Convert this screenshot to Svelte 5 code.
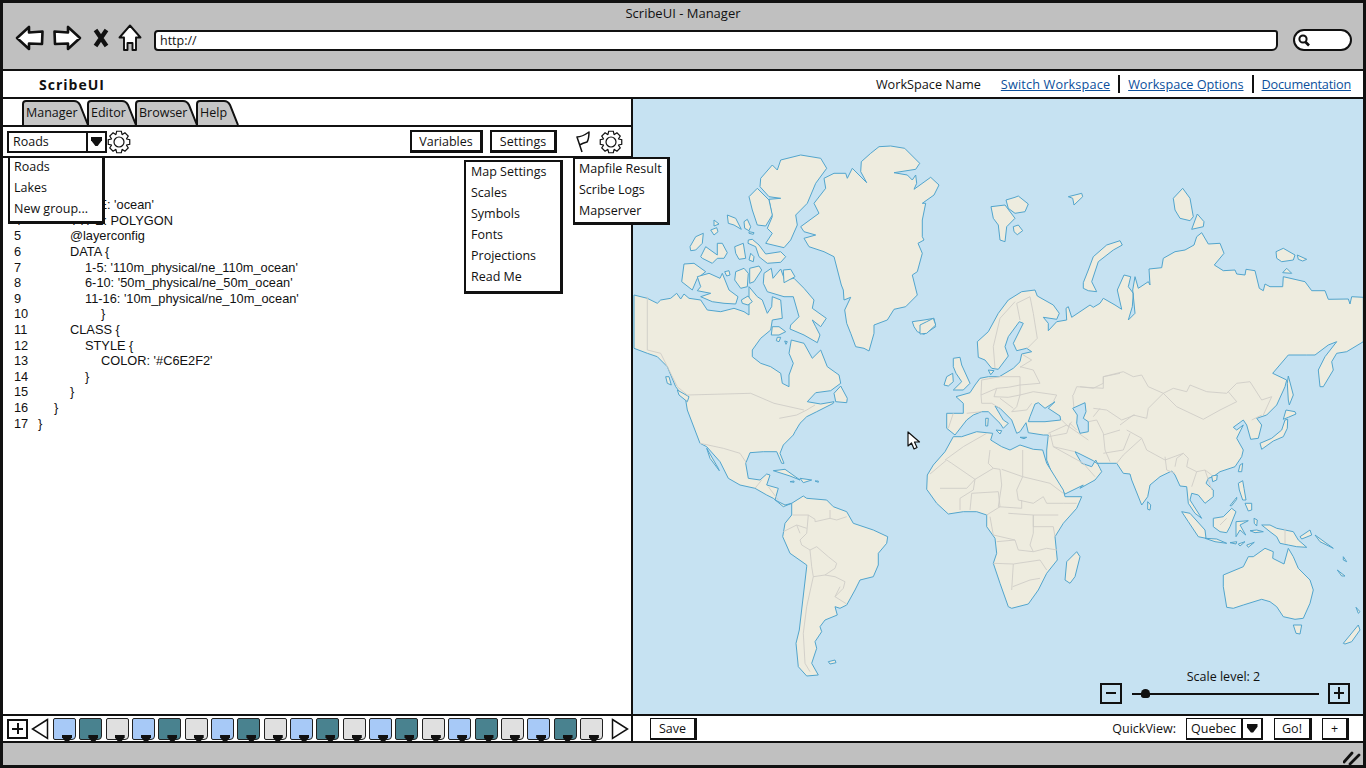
<script>
    // map outlines were traced in cropped views, each with its own origin at 1/3 scale
    const at = (ox, oy, s) =>
        s.trim().split(/\s+/).map((p) => {
            const [x, y] = p.split(',');
            return `${(ox + x / 3).toFixed(1)},${(oy + y / 3).toFixed(1)}`;
        }).join(' ');
    const z8 = (s) => at(634, 100, s);
    const z9 = (s) => at(1000, 100, s);
    const z10 = (s) => at(700, 400, s);
    const z11 = (s) => at(920, 280, s);
    const z12 = (s) => at(1080, 340, s);

    const land = [
        // north america
        z8('0,585 40,595 70,610 80,600 110,595 128,580 140,597 150,582 165,595 200,600 220,630 260,635 300,625 330,635 345,645 345,560 370,590 385,600 400,640 413,620 415,590 440,600 445,655 415,660 410,690 380,715 355,750 355,770 380,790 410,800 440,820 445,850 465,860 465,825 478,790 465,760 472,720 510,730 535,775 560,750 580,800 615,825 620,850 590,872 545,878 520,905 560,912 600,905') + ' ' +
            z10('400,10 350,35 320,50 300,70 285,95 280,105 250,135 240,160 252,190 245,190 230,155 190,155 150,158 137,190 145,235 180,240 200,222 210,225 200,255 235,265 225,300 255,315 275,310 250,320 220,295 200,285 165,265 120,255 85,235 60,185 20,140 0,130') + ' ' +
            z8('160,930 155,900 125,860 100,800 70,770 40,760 0,745'),
        // eurasia
        z11('105,465 80,445 80,400 130,400 130,370 108,350 150,338 165,315 180,295 205,290 238,290 280,265 300,245 305,222 335,215 320,205 290,212 280,190 310,130 298,125 265,170 255,200 265,228 235,268 215,265 195,240 175,232 172,185 205,155 235,100 265,60 305,35 345,30 352,48 400,75 418,100 410,118 370,112 385,130 385,152 410,125 440,120 438,85 445,80 455,112 510,75 520,82 540,70 550,55 585,75') + ' ' +
            z9('365,628 352,570 372,525 392,530 385,560 400,580 397,620 385,660 405,640 398,570 405,530 415,565 445,545 450,555 447,507 485,503 490,475 525,455 555,450 582,435 590,410 605,398 625,432 660,430 672,460 643,495 670,512 705,510 710,522 735,525 738,508 765,512 778,565 790,572 795,552 810,560 848,560 850,530 915,545 935,572 975,572 985,598 1045,597 1050,612 1055,590 1090,592 1090,728') + ' ' +
            z12('850,5 800,35 770,40 755,65 760,90 730,140 720,140 715,90 735,50 770,5 745,15 705,45 680,45 625,45 578,100 620,120 615,140 590,195 560,225 530,235 545,255 535,295 512,298 500,255 490,240 460,262 470,270 490,255 470,295 490,330 485,350 465,380 420,395 400,410 385,415 378,430 400,450 400,470 375,490 355,465 335,460 330,480 365,535 345,520 325,490 320,440 300,438 285,405 275,393 240,410 210,435 203,470 185,495 155,420 150,402 130,400 110,370 50,370 40,362 0,342') + ' ' +
            z10('1125,155 1145,190 1175,200 1187,180 1200,205') + ' ' +
            z12('65,395 45,420 0,445') + ' ' +
            z10('1150,255 1095,282 1060,230 1040,180 1040,150 1045,105') + ' ' +
            z11('370,465 325,458 318,428 300,455 290,460 275,420 240,385 225,378 250,420 265,430 250,445 240,430 205,395 185,395 160,405 140,420'),
        // africa
        z10('760,110 735,155 700,195 682,225 680,268 710,310 745,342 790,335 830,335 860,345 860,380 885,415 890,460 880,490 900,550 925,620 935,625 985,612 1015,570 1040,520 1072,480 1065,410 1090,370 1130,325 1145,290 1095,290 1090,270 1040,190 1028,150 1000,148 960,135 930,150 905,140 872,120 878,100 830,95 785,110'),
        // south america
        z10('275,310 310,288 320,295 380,300 400,320 440,335 460,370 520,390 563,410 560,430 535,460 535,495 520,530 480,540 465,570 440,615 420,625 405,620 412,645 375,660 360,680 365,695 345,725 350,745 335,790 355,825 320,828 295,800 288,730 298,690 320,500 320,495 270,460 248,410 255,370 275,345'),
        // greenland, iceland
        z8('500,380 555,340 540,310 575,265 570,235 600,220 635,220 640,235 655,205 698,248 680,215 682,185 710,160 735,140 770,138 812,145 857,190 845,208 780,218 820,225 835,240 845,225 848,250 840,268 890,232 915,255 900,285 865,310 875,310 865,360 865,410 870,420 852,430 865,460 850,515 835,525 850,585 815,620 780,628 760,660 720,675 720,700 705,753 690,745 665,740 650,700 638,670 632,630 650,592 630,600 628,570 622,555 600,470 570,455 525,440 510,415 545,405 510,395'),
        z8('835,665 870,660 900,655 905,680 870,703 850,695 840,680'),
        // arctic canada
        z8('380,235 415,195 430,210 440,180 500,165 560,175 578,205 545,250 520,310 485,345 490,375 470,420 450,443 395,430 415,400 400,385 415,350 405,298 440,295 405,290 378,260'),
        z8('345,290 370,265 405,300 415,345 395,378 370,375 355,330'),
        z8('168,440 185,410 208,400 205,430 185,450 170,452'),
        z8('200,470 215,440 250,465 250,430 265,430 280,458 270,475 250,475 235,490 205,475'),
        z8('240,360 255,372 240,378'),
        z8('230,390 248,383 252,395 240,405'),
        z8('280,345 305,355 322,388 300,375 283,370'),
        z8('330,365 340,358 350,380 345,392 332,385'),
        z8('345,395 360,398 358,403 345,400'),
        z8('302,440 328,430 335,475 315,478 305,460'),
        z8('343,420 355,418 375,435 395,462 440,455 455,470 440,487 400,490 375,470 365,440 342,430'),
        z8('350,460 360,470 358,485 345,480'),
        z8('150,492 180,490 215,515 190,535 175,570 143,545'),
        z8('190,530 225,520 258,535 265,520 285,570 312,590 305,612 270,610 235,605 200,590 230,580 190,572 200,560'),
        z8('305,515 330,505 343,520 340,560 320,565 302,540'),
        z8('272,515 285,512 288,525 278,528'),
        z8('347,505 375,498 383,510 360,545 347,550'),
        z8('322,600 342,588 355,605 342,615 325,610'),
        z8('390,520 412,505 417,535 440,507 452,540 480,535 510,565 540,600 535,625 577,655 560,680 535,660 545,680 558,705 550,728 510,705 468,687 470,675 495,650 478,590 450,590 400,575 388,550'),
        z8('448,510 470,508 483,530 450,548'),
        z8('415,680 435,680 455,695 435,705 412,705'),
        z8('430,712 440,712 435,725 427,722'),
        z8('452,723 460,725 456,733'),
        z8('95,830 105,830 112,855 100,850'),
        z8('130,870 165,890 160,905 135,885'),
        z8('600,880 620,858 640,895 638,908 605,905'),
        // caribbean, baja, falklands, madagascar
        z10('20,145 55,205 58,212 30,175'),
        z10('220,212 255,208 300,240 270,228'),
        z10('300,235 335,240 310,248'),
        z10('270,245 282,243 282,247'),
        z10('345,243 355,243 355,247'),
        z10('385,785 405,780 408,788 390,792'),
        z10('1130,455 1140,470 1125,530 1110,550 1095,540 1100,485'),
        // europe islands
        z11('100,235 120,232 125,255 150,310 130,330 100,330 125,305 108,280 100,260'),
        z11('72,315 80,290 98,280 100,305 85,318'),
        z11('0,135 20,125 40,115 47,135 20,160 0,162'),
        z11('228,450 245,452 240,462'),
        z11('197,415 205,415 203,438 197,438'),
        z11('300,472 320,472 312,476'),
        z11('205,270 222,272 212,284'),
        // russian arctic
        z9('18,300 45,292 55,288 85,312 75,335 45,340 25,325'),
        z9('-27,320 15,315 45,355 20,380 15,425 0,420 -5,375 -20,355'),
        z9('40,380 55,375 68,392 52,404 42,395'),
        z9('250,548 265,510 280,470 320,435 360,422 367,435 340,450 295,485 275,545 290,575 265,572 250,565'),
        z9('205,290 245,280 248,290 222,315 218,295'),
        z9('520,295 548,265 570,295 580,350 570,362 540,355 525,330'),
        z9('575,388 592,342 612,365 610,380'),
        z9('828,455 850,445 885,465 880,480 845,485 830,475'),
        z9('892,465 920,478 908,483 895,478'),
        z9('848,518 860,505 875,520'),
        // japan, se asia, oceania
        z12('540,310 575,295 605,270 615,240 623,238 622,265 610,290 580,303 545,328'),
        z12('618,210 645,215 648,222 625,232 610,238'),
        z12('625,108 632,135 640,165 628,195 625,180 622,130'),
        z12('480,375 488,370 485,395 475,395'),
        z12('395,408 412,405 410,420 398,425'),
        z12('203,485 212,495 210,510 203,508'),
        z12('475,430 488,422 492,445 498,480 488,480 478,450'),
        z12('495,490 515,490 515,510 505,513'),
        z12('450,497 470,472 470,478 455,497'),
        z12('400,535 430,530 455,505 468,515 450,560 440,578 420,575 400,560'),
        z12('305,515 330,520 375,570 378,595 355,590 325,545'),
        z12('375,595 410,597 440,610 405,605'),
        z12('468,545 505,542 480,555 497,585 480,570 468,590'),
        z12('545,555 570,555 590,565 640,575 655,600 680,622 650,620 625,615 600,610 590,590 570,575'),
        z12('450,608 470,605 468,612'),
        z12('475,612 495,605 480,618'),
        z12('500,615 523,607 505,622'),
        z12('510,572 530,570 550,575 525,578'),
        z12('522,535 532,540 530,558 523,550'),
        z12('660,590 690,570 695,585 665,597'),
        z12('705,585 760,625 720,605'),
        z12('430,705 490,680 505,650 520,650 555,625 580,635 578,655 612,672 625,625 640,650 655,685 690,720 700,750 690,790 670,835 645,838 610,830 590,800 570,785 545,778 490,795 460,805 440,802 430,740'),
        z12('640,855 665,855 660,882 648,880'),
        z12('790,910 835,855 840,870 815,905 795,912'),
        z12('828,802 840,815 835,820'),
        z12('772,690 795,708 785,708'),
        z12('790,650 800,665 790,660')
    ];

    // inland seas sit on top of the land shapes
    const seas = [
        z11('330,410 345,372 355,368 375,385 405,365 385,385 420,408 422,420 375,425 325,425'),
        z11('458,385 495,368 498,395 490,415 505,425 505,455 480,460 470,430 472,405')
    ];

    const borders = [
        z8('40,590 40,750'),
        z8('40,750 80,760 130,860 160,885 350,880 420,910 510,930'),
        z10('238,55 290,45 320,30 345,15'),
        z10('0,130 70,145 120,160 140,190'),
        z10('165,265 185,240'),
        z10('205,260 235,300'),
        z10('278,345 325,345 345,358 345,365 390,355 390,330'),
        z10('390,355 410,360 440,350'),
        z10('325,345 320,400 300,420 305,435 330,450 350,440 385,470 410,490 405,505 375,525 405,530 435,545 430,565 405,590 440,612'),
        z10('250,395 290,375 320,385'),
        z10('290,375 300,400'),
        z10('330,450 335,500 340,530 375,525'),
        z10('340,530 320,620 310,700 315,790 330,815'),
        z10('405,590 420,560'),
        z10('690,222 740,180 755,190 825,238 880,205 900,208 905,255 895,320'),
        z10('735,180 790,140 860,100'),
        z10('870,150 865,190 880,205'),
        z10('968,150 968,230 950,270 955,300 1000,310 1030,290'),
        z10('905,208 968,230 1050,250 1090,280'),
        z10('720,265 800,265 825,238 820,270 780,295 780,330'),
        z10('810,330 815,280 895,275 900,320 860,345'),
        z10('895,320 965,325 965,300'),
        z10('1030,290 1040,310 1090,310 1130,310'),
        z10('1075,345 1000,345 1000,380 1060,380 1065,410'),
        z10('925,340 1000,345 1000,400 990,435 1000,455 1040,445 1072,450'),
        z10('880,490 940,492 1020,480 1040,510'),
        z10('890,425 945,420 955,450 1000,455'),
        z10('940,492 935,570'),
        z10('938,560 990,540 1020,535'),
        z10('870,350 880,405 945,420'),
        z10('1045,100 1100,75 1165,120'),
        z10('1050,100 1060,140 1125,155'),
        z10('1060,140 1150,190 1185,230'),
        z11('185,300 240,290 300,290 300,315 360,310 340,270 300,260'),
        z11('230,325 265,322 300,315 300,345 340,335 410,345 400,365'),
        z11('183,345 185,370 215,370 240,385'),
        z11('85,445 100,400'),
        z11('140,400 185,395'),
        z11('185,300 183,345 230,325 222,350 265,352 300,345 290,380 275,395 320,390 335,370'),
        z11('240,355 280,385'),
        z11('305,222 335,240 300,262'),
        z11('290,70 330,50 340,100 352,175 322,205'),
        z11('285,65 240,115 220,200 225,265'),
        z11('290,70 300,120'),
        z11('460,345 470,320 550,325 550,290 600,280'),
        z11('425,420 445,440 455,425'),
        z11('440,460 450,430 470,450'),
        z11('385,470 440,460'),
        z11('458,345 462,385'),
        z12('0,140 40,145 70,130 70,110 130,95 160,110 185,105 205,140 250,160 280,145 320,155 330,135 380,155 440,160 470,130 510,125 545,180 575,170 550,225'),
        z12('250,160 290,200 370,238 420,210 470,185 445,155'),
        z12('250,160 205,205 200,235 160,225 120,255'),
        z12('40,205 80,210 125,240 165,225'),
        z12('0,250 50,240 70,280 75,330 90,365'),
        z12('120,270 70,285'),
        z12('140,270 185,295 200,330 255,360 310,340 325,355 320,380'),
        z12('185,295 130,345 110,370'),
        z12('70,340 130,330 150,280'),
        z12('255,350 260,390 285,400'),
        z12('310,340 290,355 285,380'),
        z12('320,380 350,395 375,390 395,405'),
        z12('350,395 335,440'),
        z12('375,390 395,450'),
        z12('545,225 515,240'),
        z12('40,230 60,205'),
        z12('615,565 615,612'),
        z12('420,555 440,535')
    ];

    const tabs = [
        { label: 'Manager', width: 65 },
        { label: 'Editor', width: 48 },
        { label: 'Browser', width: 61 },
        { label: 'Help', width: 41 }
    ];

    const colors = ['blue', 'teal', 'grey'];
    const thumbs = Array.from({ length: 21 }, (_, i) => colors[i % 3]);

    const code = [
        { n: 1, x: 35, text: '{' },
        { n: 2, x: 51, text: 'LAYER {' },
        { n: 3, x: 67, text: "NAME: 'ocean'" },
        { n: 4, x: 67, text: 'TYPE: POLYGON' },
        { n: 5, x: 67, text: '@layerconfig' },
        { n: 6, x: 67, text: 'DATA {' },
        { n: 7, x: 82, text: "1-5: '110m_physical/ne_110m_ocean'" },
        { n: 8, x: 82, text: "6-10: '50m_physical/ne_50m_ocean'" },
        { n: 9, x: 82, text: "11-16: '10m_physical/ne_10m_ocean'" },
        { n: 10, x: 98, text: '}' },
        { n: 11, x: 67, text: 'CLASS {' },
        { n: 12, x: 82, text: 'STYLE {' },
        { n: 13, x: 98, text: "COLOR: '#C6E2F2'" },
        { n: 14, x: 82, text: '}' },
        { n: 15, x: 67, text: '}' },
        { n: 16, x: 51, text: '}' },
        { n: 17, x: 35, text: '}' }
    ];

    const groupItems = ['Roads', 'Lakes', 'New group...'];
    const settingItems = ['Map Settings', 'Scales', 'Symbols', 'Fonts', 'Projections', 'Read Me'];
    const resultItems = ['Mapfile Result', 'Scribe Logs', 'Mapserver'];

    // outline of a gear, centre 12,12
    function gearPath(teeth = 8, outer = 11, inner = 8.2) {
        const step = (Math.PI * 2) / teeth;
        let pts = [];
        for (let i = 0; i < teeth; i++) {
            const a = i * step;
            for (const [off, r] of [[-0.3, inner], [-0.17, outer], [0.17, outer], [0.3, inner]]) {
                pts.push(`${(12 + Math.cos(a + off * step * 1.6) * r).toFixed(2)},${(12 + Math.sin(a + off * step * 1.6) * r).toFixed(2)}`);
            }
        }
        return 'M' + pts.join('L') + 'Z';
    }
    const gear = gearPath();
</script>

{#snippet gearIcon(size)}
    <svg class="gear" width={size} height={size} viewBox="0 0 24 24">
        <path d={gear} fill="#fff" stroke="#111" stroke-width="1.2" />
        <circle cx="12" cy="12" r="5" fill="none" stroke="#111" stroke-width="1.2" />
    </svg>
{/snippet}

<div class="window">
    <div class="chrome">
        <div class="title">ScribeUI - Manager</div>
        <div class="navrow">
            <svg class="back" width="30" height="26" viewBox="0 0 30 26">
                <path d="M2 13 L14 2 L14 7.5 L27.5 6.5 L27 19 L14 18.5 L14 24 Z" fill="#fff" stroke="#111" stroke-width="2.6" stroke-linejoin="round" />
            </svg>
            <svg class="fwd" width="30" height="26" viewBox="0 0 30 26">
                <path d="M28 13 L16 2 L16 7.5 L2.5 6.5 L3 19 L16 18.5 L16 24 Z" fill="#fff" stroke="#111" stroke-width="2.6" stroke-linejoin="round" />
            </svg>
            <svg class="stop" width="16" height="20" viewBox="0 0 16 20">
                <path d="M2.5 2 L13.5 18 M13.5 2 L2.5 18" stroke="#111" stroke-width="4.4" fill="none" />
            </svg>
            <svg class="home" width="24" height="28" viewBox="0 0 24 28">
                <path d="M12 1.5 L22.5 13.5 L18 13.5 L18 26 L14.5 26 L14.5 19 L9.5 19 L9.5 26 L6 26 L6 13.5 L1.5 13.5 Z" fill="#fff" stroke="#111" stroke-width="1.9" stroke-linejoin="round" />
            </svg>
            <div class="url">http://</div>
            <div class="search">
                <svg width="16" height="14" viewBox="0 0 16 14">
                    <circle cx="7" cy="6" r="3.6" fill="none" stroke="#111" stroke-width="2" />
                    <path d="M9.5 9 L13 12.5" stroke="#111" stroke-width="2.6" />
                </svg>
            </div>
        </div>
    </div>

    <div class="header">
        <div class="brand">ScribeUI</div>
        <div class="links">
            <span class="ws">WorkSpace Name</span>
            <a class="wide" href="#switch">Switch Workspace</a>
            <i></i>
            <a href="#options">Workspace Options</a>
            <i></i>
            <a class="narrow" href="#docs">Documentation</a>
        </div>
    </div>

    <div class="main">
        <div class="left">
            <div class="tabs">
                {#each tabs as tab}
                    <div class="tab" style="width: {tab.width}px;">
                        <svg width={tab.width + 2} height="26" viewBox="0 0 {tab.width + 2} 26">
                            <path d="M1 26 V5 Q1 2 4 2 H{tab.width - 13} Q{tab.width - 9} 2 {tab.width - 7} 6 L{tab.width + 1} 26" fill="#c6c6c6" stroke="#111" stroke-width="2" />
                        </svg>
                        <span>{tab.label}</span>
                    </div>
                {/each}
            </div>

            <div class="toolbar">
                <div class="combo">
                    <span>Roads</span>
                    <b><em></em></b>
                </div>
                {@render gearIcon(24)}
                <div class="spacer"></div>
                <button class="btn">Variables</button>
                <button class="btn">Settings</button>
                <svg class="flag" width="18" height="24" viewBox="0 0 18 24">
                    <path d="M8 22 L3 7 Q8 7 15 2 Q15 9 13 12 Q9 13 5.5 15" fill="none" stroke="#111" stroke-width="1.5" stroke-linejoin="round" />
                </svg>
                {@render gearIcon(24)}
            </div>

            <div class="code">
                {#each code as line}
                    <div class="line">
                        <span class="num">{line.n}</span>
                        <span style="left: {line.x}px;" class="txt">{line.text}</span>
                    </div>
                {/each}
            </div>
        </div>

        <div class="map">
            <svg width="730" height="615" viewBox="633 99 730 615">
                <rect x="633" y="99" width="730" height="615" fill="#c6e2f2" />
                {#each land as points}
                    <polygon {points} fill="#eeecdf" stroke="#52a5cd" stroke-width="1" stroke-linejoin="round" />
                {/each}
                {#each borders as points}
                    <polyline {points} fill="none" stroke="#cfcdc7" stroke-width="0.9" />
                {/each}
                {#each seas as points}
                    <polygon {points} fill="#c6e2f2" stroke="#52a5cd" stroke-width="1" stroke-linejoin="round" />
                {/each}
            </svg>

            <svg class="cursor" width="14" height="20" viewBox="0 0 14 20">
                <path d="M1 1 L1 15 L4.5 12 L7 18 L10 16.5 L7.5 11 L12.5 11 Z" fill="#fff" stroke="#111" stroke-width="1.2" stroke-linejoin="round" />
            </svg>

            <div class="scale">
                <div class="scale-label">Scale level: 2</div>
                <div class="scale-row">
                    <div class="zoombox minus"><span></span></div>
                    <div class="track"><em></em></div>
                    <div class="zoombox plus"><span></span></div>
                </div>
            </div>
        </div>

        <!-- menus hang over both panes -->
        <div class="menu groups">
            {#each groupItems as item}<div>{item}</div>{/each}
        </div>
        <div class="menu settings">
            {#each settingItems as item}<div>{item}</div>{/each}
        </div>
        <div class="menu results">
            {#each resultItems as item}<div>{item}</div>{/each}
        </div>
    </div>

    <div class="foot">
        <div class="foot-left">
            <div class="addbox"></div>
            <svg width="18" height="22" viewBox="0 0 18 22">
                <path d="M16.5 1.5 L1.5 11 L16.5 20.5 Z" fill="#fff" stroke="#111" stroke-width="1.5" />
            </svg>
            <div class="thumbs">
                {#each thumbs as color}
                    <div class="thumb {color}"></div>
                {/each}
            </div>
            <svg width="18" height="22" viewBox="0 0 18 22">
                <path d="M1.5 1.5 L16.5 11 L1.5 20.5 Z" fill="#fff" stroke="#111" stroke-width="1.5" />
            </svg>
        </div>
        <div class="foot-right">
            <button class="fbtn save">Save</button>
            <div class="spacer"></div>
            <span class="qv">QuickView:</span>
            <div class="combo small">
                <span>Quebec</span>
                <b><em></em></b>
            </div>
            <button class="fbtn go">Go!</button>
            <button class="fbtn add">+</button>
        </div>
    </div>

    <div class="status">
        <svg width="18" height="15" viewBox="0 0 18 15">
            <path d="M1 12 L9 3 M7 14 L16 5" stroke="#111" stroke-width="2.8" stroke-linecap="round" />
        </svg>
    </div>
</div>

<style>
    :global(body) {
        margin: 0;
        background: #fff;
    }

    .window {
        width: 1366px;
        height: 768px;
        box-sizing: border-box;
        border: 3px solid #111;
        display: flex;
        flex-direction: column;
        overflow: hidden;
        font-family: "Open Sans", "Liberation Sans", sans-serif;
        font-size: 12.5px;
        color: #111;
    }

    .chrome {
        height: 66px;
        flex: none;
        background: #c0c0c0;
        border-bottom: 2px solid #111;
    }

    .title {
        text-align: center;
        height: 21px;
        line-height: 21px;
        font-size: 13px;
    }

    .navrow {
        display: flex;
        align-items: center;
        padding-left: 12px;
        height: 26px;
        margin-top: 1px;
    }

    .fwd {
        margin-left: 7px;
    }

    .stop {
        margin-left: 11px;
    }

    .home {
        margin-left: 9px;
    }

    .url {
        margin: 4px 0 0 12px;
        width: 1124px;
        height: 21px;
        box-sizing: border-box;
        background: #fff;
        border: 2px solid #111;
        border-radius: 4px 3px 6px 4px;
        line-height: 17px;
        padding-left: 4px;
    }

    .search {
        margin: 4px 0 0 15px;
        width: 59px;
        height: 22px;
        box-sizing: border-box;
        background: #fff;
        border: 2px solid #111;
        border-radius: 11px;
        display: flex;
        align-items: center;
        padding-left: 1px;
    }

    .header {
        height: 26px;
        flex: none;
        border-bottom: 2px solid #111;
        background: #fff;
        display: flex;
        align-items: center;
        justify-content: space-between;
        padding: 0 12px 0 36px;
        font-size: 12.7px;
    }

    .brand {
        font-weight: 700;
        font-size: 14px;
        letter-spacing: 1px;
    }

    .links {
        display: flex;
        align-items: center;
        gap: 8px;
    }

    .links a {
        color: #0b4f9c;
        text-decoration: underline;
    }

    .links .wide {
        letter-spacing: 0.15px;
    }

    .links .narrow {
        letter-spacing: -0.2px;
    }

    .links i {
        width: 2px;
        height: 18px;
        background: #111;
    }

    .ws {
        margin-right: 12px;
    }

    .main {
        height: 615px;
        flex: none;
        display: flex;
        position: relative;
    }

    .left {
        width: 628px;
        flex: none;
        border-right: 2px solid #111;
        display: flex;
        flex-direction: column;
        background: #fff;
    }

    .tabs {
        height: 26px;
        flex: none;
        display: flex;
        padding-left: 19px;
        border-bottom: 2px solid #111;
    }

    .tab {
        position: relative;
        height: 26px;
        flex: none;
    }

    .tab svg {
        position: absolute;
        left: 0;
        top: 0;
    }

    .tab span {
        position: absolute;
        left: 4px;
        top: 4px;
        line-height: 20px;
    }

    .toolbar {
        height: 29px;
        flex: none;
        border-bottom: 2px solid #111;
        display: flex;
        align-items: center;
        padding: 0 8px 0 4px;
    }

    .spacer {
        flex: 1;
    }

    .combo {
        width: 100px;
        height: 22px;
        box-sizing: border-box;
        border: 2px solid #111;
        background: #fff;
        display: flex;
        align-items: center;
        padding-left: 4px;
    }

    .combo span {
        flex: 1;
    }

    .combo b {
        width: 17px;
        height: 100%;
        flex: none;
        border-left: 2px solid #111;
        display: flex;
        align-items: center;
        justify-content: center;
    }

    .combo em,
    .thumb::after {
        display: block;
        background: #111;
        clip-path: polygon(0 0, 100% 0, 100% 35%, 60% 100%, 40% 100%, 0 35%);
    }

    .combo em {
        width: 11px;
        height: 9px;
    }

    .gear {
        flex: none;
    }

    .btn {
        height: 23px;
        box-sizing: border-box;
        padding: 0;
        background: #fff;
        border: 2px solid #111;
        border-right-width: 3px;
        border-bottom-width: 3px;
        font: inherit;
        color: inherit;
    }

    .btn:nth-of-type(1) {
        width: 73px;
        margin-right: 7px;
    }

    .btn:nth-of-type(2) {
        width: 67px;
        margin-right: 17px;
    }

    .flag {
        margin-right: 7px;
    }

    .code {
        flex: 1;
        padding-top: 8px;
        font-family: "Liberation Sans", sans-serif;
        font-size: 12.8px;
    }

    .line {
        position: relative;
        height: 15.6px;
        line-height: 15.6px;
    }

    .num {
        position: absolute;
        left: 11px;
    }

    .txt {
        position: absolute;
        white-space: nowrap;
    }

    .map {
        flex: 1;
        position: relative;
        overflow: hidden;
        background: #c6e2f2;
    }

    .map > svg:first-child {
        display: block;
    }

    .cursor {
        position: absolute;
        left: 274px;
        top: 332px;
    }

    .scale {
        position: absolute;
        left: 467px;
        top: 570px;
        width: 250px;
    }

    .scale-label {
        text-align: center;
        line-height: 16px;
        padding-right: 3px;
    }

    .scale-row {
        display: flex;
        align-items: center;
        margin-top: -2px;
    }

    .zoombox {
        width: 22px;
        height: 21px;
        box-sizing: border-box;
        border: 2px solid #111;
        position: relative;
        flex: none;
    }

    .zoombox span::before,
    .plus span::after {
        content: "";
        position: absolute;
        background: #111;
        left: 4px;
        right: 4px;
        top: 7px;
        height: 2px;
    }

    .plus span::after {
        left: 7.5px;
        right: auto;
        width: 2px;
        height: auto;
        top: 2px;
        bottom: 3px;
    }

    .track {
        flex: 1;
        height: 2px;
        background: #111;
        margin: 0 9px 0 10px;
        position: relative;
    }

    .track em {
        position: absolute;
        left: 9px;
        top: -4px;
        width: 9px;
        height: 9px;
        background: #111;
        border-radius: 50% 50% 30% 30%;
    }

    .menu {
        position: absolute;
        box-sizing: border-box;
        background: #fff;
        border: 2px solid #111;
        border-right-width: 3px;
        border-bottom-width: 3px;
        z-index: 2;
        padding: 0 4px;
        font-size: 12.5px;
    }

    .menu div {
        height: 21px;
        line-height: 19px;
        white-space: nowrap;
    }

    .groups {
        left: 5px;
        top: 57px;
        width: 97px;
        height: 68px;
    }

    .groups div {
        position: relative;
        top: -1px;
    }

    .settings {
        left: 461px;
        top: 61px;
        width: 99px;
        height: 134px;
        padding: 0 5px;
    }

    .results {
        left: 570px;
        top: 58px;
        width: 97px;
        height: 68px;
    }

    .foot {
        height: 29px;
        flex: none;
        border-top: 2px solid #111;
        border-bottom: 2px solid #111;
        box-sizing: border-box;
        display: flex;
        background: #fff;
    }

    .foot-left {
        width: 624px;
        flex: none;
        border-right: 2px solid #111;
        display: flex;
        align-items: center;
        padding-left: 4px;
    }

    .addbox {
        width: 21px;
        height: 20px;
        box-sizing: border-box;
        border: 2px solid #111;
        margin-right: 3px;
        flex: none;
        background: linear-gradient(#111, #111) center / 11px 2px no-repeat,
            linear-gradient(#111, #111) center / 2px 11px no-repeat;
    }

    .thumbs {
        display: flex;
        gap: 3.35px;
        margin: 0 8px 0 4px;
        flex: none;
    }

    .thumb {
        width: 23px;
        height: 22px;
        box-sizing: border-box;
        border: 1.5px solid #222;
        border-radius: 2px 2px 4px 2px;
        position: relative;
        flex: none;
    }

    .thumb::after {
        content: "";
        position: absolute;
        right: 3px;
        bottom: -4px;
        width: 10px;
        height: 8px;
    }

    .blue {
        background: #a7c9f7;
    }

    .teal {
        background: #49828f;
    }

    .grey {
        background: #e0e0e0;
    }

    .foot-right {
        flex: 1;
        display: flex;
        align-items: center;
        padding: 0 14px 0 17px;
        min-width: 0;
    }

    .fbtn {
        height: 22px;
        box-sizing: border-box;
        background: #fff;
        padding: 0;
        border: 1px solid #111;
        border-right-width: 3px;
        border-bottom-width: 2px;
        font: inherit;
        color: inherit;
    }

    .save {
        width: 47px;
    }

    .go {
        width: 38px;
        margin-left: 11px;
    }

    .add {
        width: 27px;
        margin-left: 10px;
    }

    .qv {
        margin-right: 10px;
    }

    .combo.small {
        width: 77px;
        border-width: 1px 2px 2px 1px;
        padding-left: 4px;
    }

    .combo.small b {
        width: 18px;
    }

    .status {
        height: 22px;
        flex: none;
        background: #c0c0c0;
        display: flex;
        align-items: flex-end;
        justify-content: flex-end;
        padding: 0 2px 1px 0;
    }
</style>
